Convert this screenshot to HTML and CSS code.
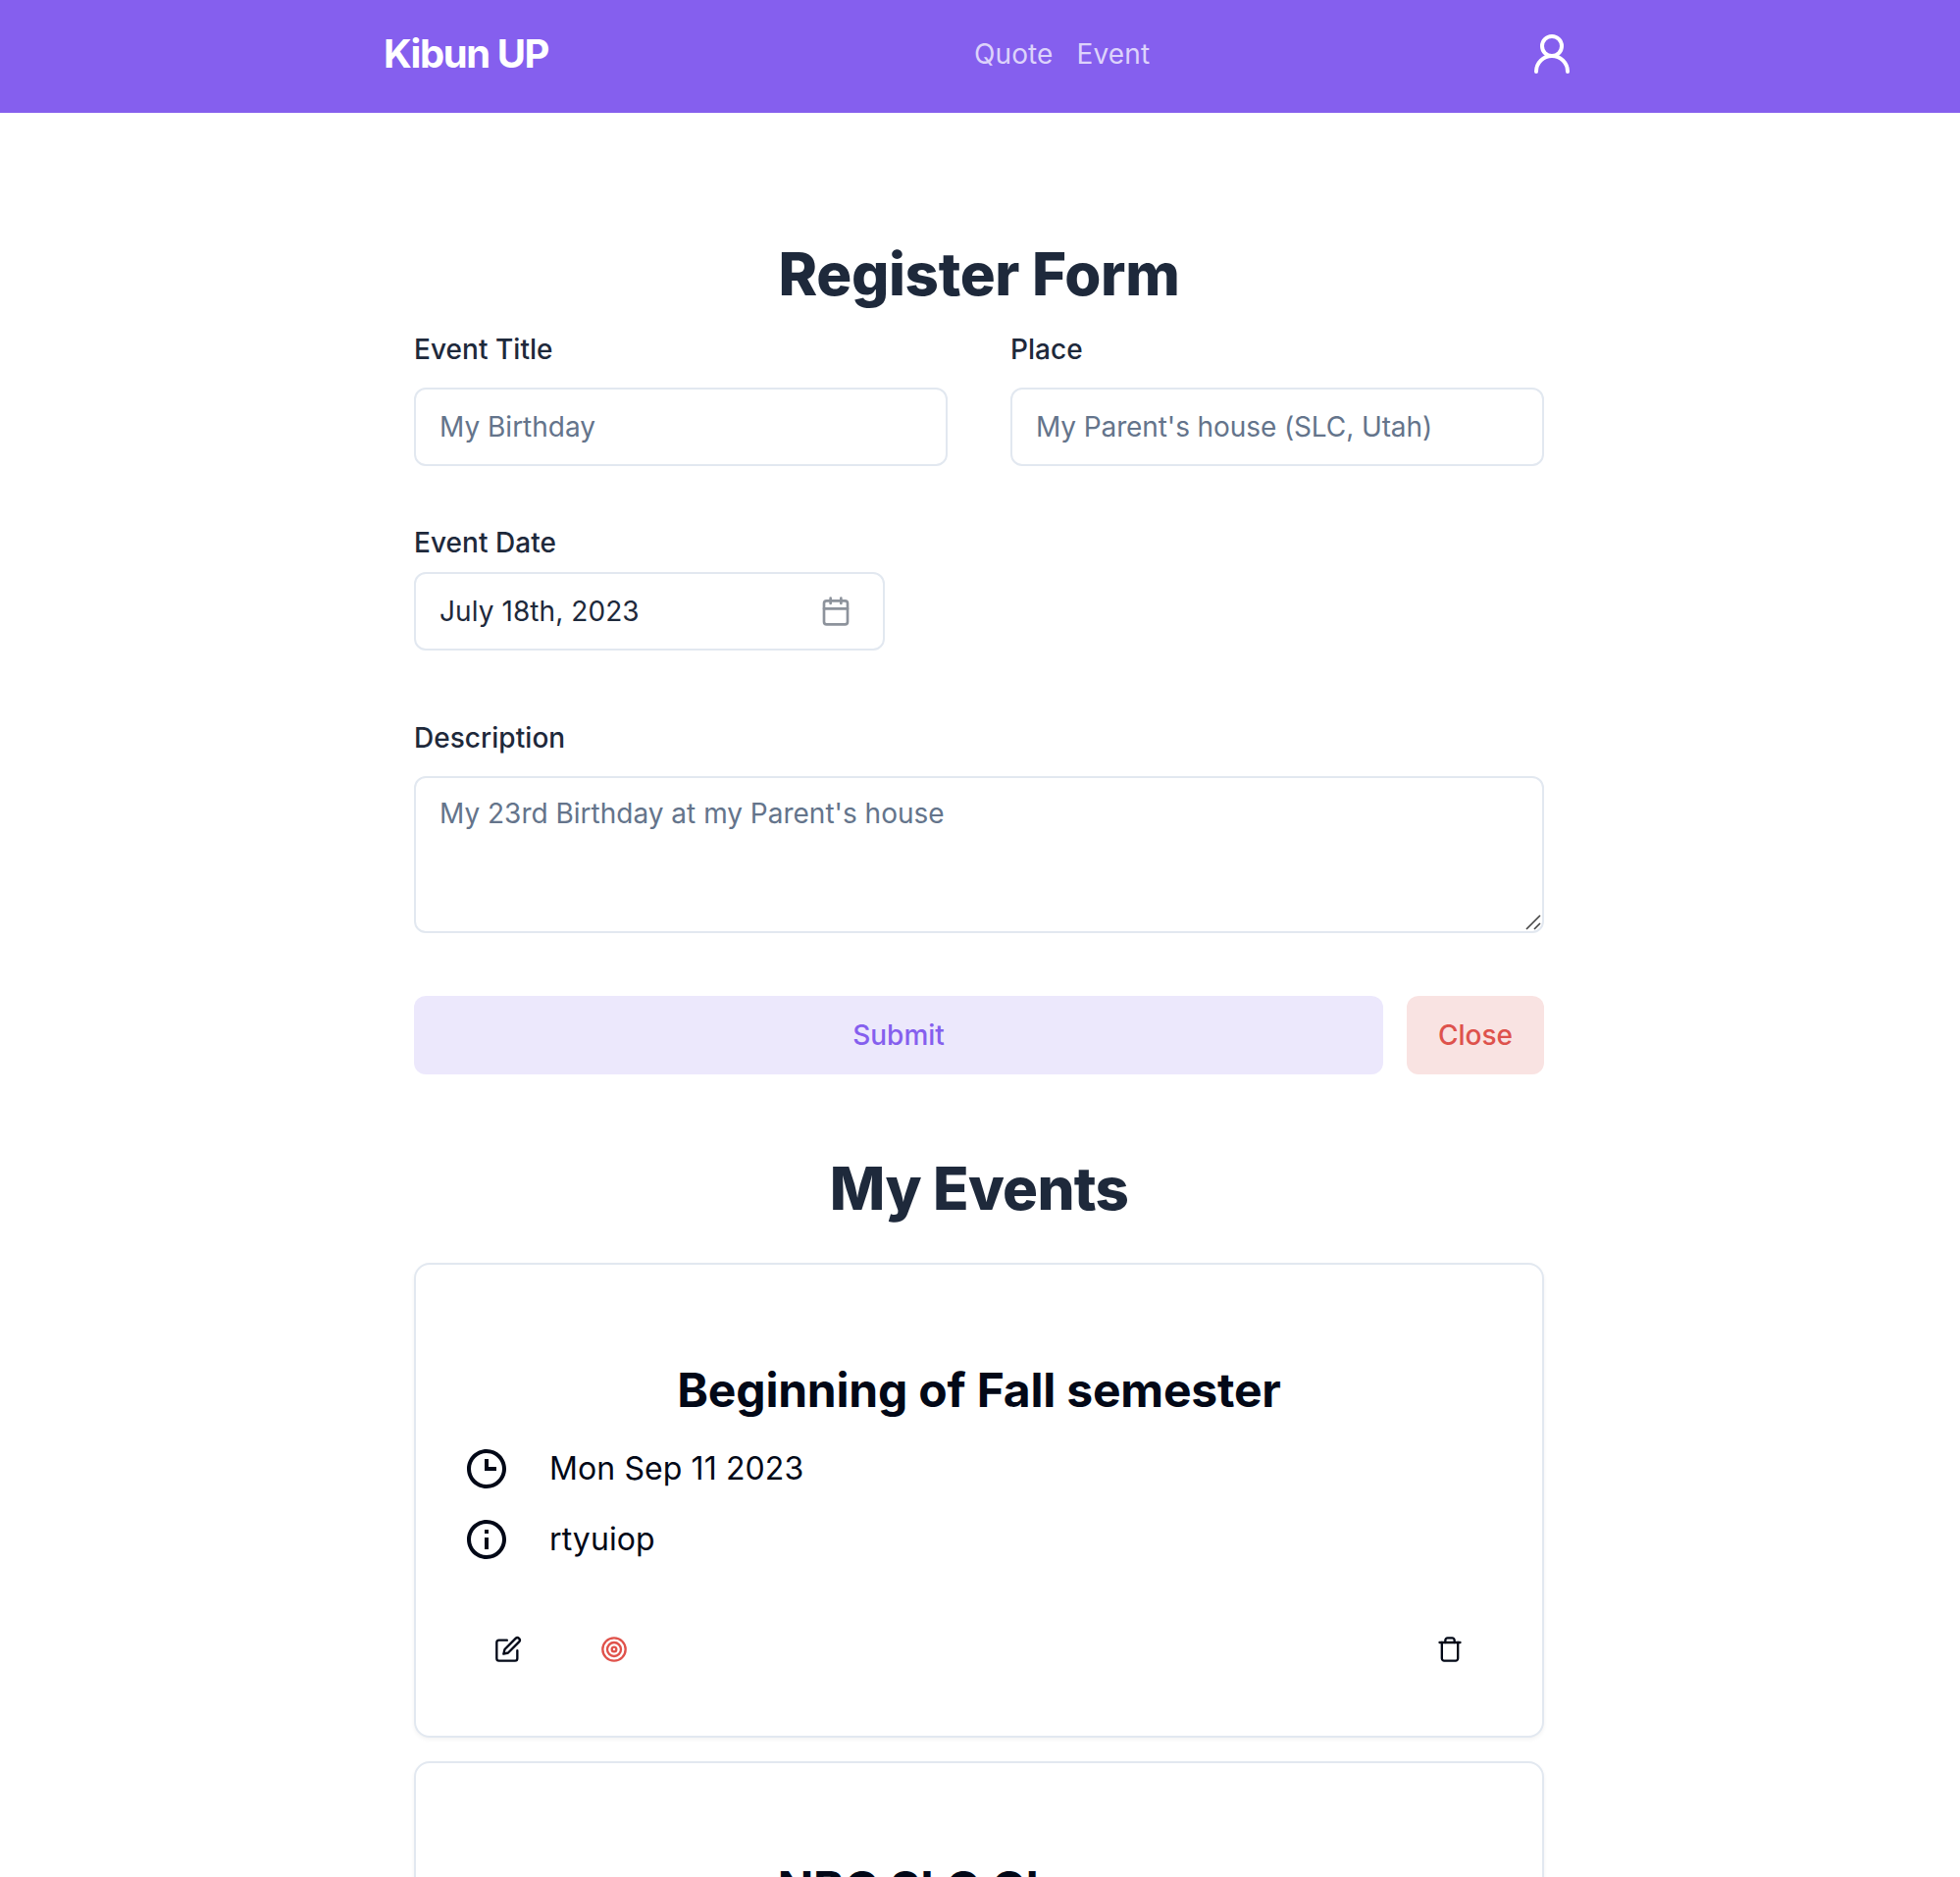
FILE: index.html
```html
<!DOCTYPE html>
<html lang="en">
<head>
<meta charset="utf-8">
<title>Kibun UP</title>
<link rel="stylesheet" href="styles.css">
</head>
<body>
<header class="header">
  <div class="header-inner">
    <a class="logo">Kibun UP</a>
    <nav class="nav"><a>Quote</a><a>Event</a></nav>
    <svg class="icon user" viewBox="0 0 24 24"><circle cx="12" cy="8" r="5"/><path d="M20 21a8 8 0 0 0-16 0"/></svg>
  </div>
</header>
<main class="main">
  <h1 class="heading">Register Form</h1>
  <form class="form">
    <div class="pair">
      <div class="field"><label class="label">Event Title</label><input class="input" placeholder="My Birthday"></div>
      <div class="field"><label class="label">Place</label><input class="input place" placeholder="My Parent's house (SLC, Utah)"></div>
    </div>
    <div class="field date-field">
      <label class="label">Event Date</label>
      <button type="button" class="date">July 18th, 2023
        <svg class="icon calendar" viewBox="0 0 24 24"><rect x="3" y="4" width="18" height="18" rx="2"/><path d="M16 2v4M8 2v4M3 10h18"/></svg>
      </button>
    </div>
    <div class="field description-field">
      <label class="label">Description</label>
      <div class="area-wrap">
        <textarea class="input area" placeholder="My 23rd Birthday at my Parent's house"></textarea>
        <svg class="grip" viewBox="0 0 16 16"><path d="M1 15 15 1M9 15l6-6"/></svg>
      </div>
    </div>
    <div class="actions">
      <button type="button" class="btn submit">Submit</button>
      <button type="button" class="btn close">Close</button>
    </div>
  </form>
  <h2 class="heading events-heading">My Events</h2>
  <section class="events">
    <article class="card">
      <h3 class="card-title">Beginning of Fall semester</h3>
      <div class="row">
        <svg class="solid" viewBox="0 0 24 24"><path d="M12 2C6.486 2 2 6.486 2 12s4.486 10 10 10 10-4.486 10-10S17.514 2 12 2zm0 18c-4.411 0-8-3.589-8-8s3.589-8 8-8 8 3.589 8 8-3.589 8-8 8z"/><path d="M13 7h-2v6h6v-2h-4z"/></svg>
        <span>Mon Sep 11 2023</span>
      </div>
      <div class="row">
        <svg class="solid" viewBox="0 0 24 24"><path d="M12 2C6.486 2 2 6.486 2 12s4.486 10 10 10 10-4.486 10-10S17.514 2 12 2zm0 18c-4.411 0-8-3.589-8-8s3.589-8 8-8 8 3.589 8 8-3.589 8-8 8z"/><path d="M11 11h2v6h-2zm0-4h2v2h-2z"/></svg>
        <span>rtyuiop</span>
      </div>
      <div class="tools">
        <button class="tool"><svg class="icon" viewBox="0 0 24 24"><path d="M11 4H4a2 2 0 0 0-2 2v14a2 2 0 0 0 2 2h14a2 2 0 0 0 2-2v-7"/><path d="M18.5 2.5a2.12 2.12 0 0 1 3 3L12 15l-4 1 1-4Z"/></svg></button>
        <button class="tool target"><svg class="icon" viewBox="0 0 24 24"><circle cx="12" cy="12" r="10"/><circle cx="12" cy="12" r="6"/><circle cx="12" cy="12" r="2"/></svg></button>
        <button class="tool trash"><svg class="icon" viewBox="0 0 24 24"><path d="M3 6h18"/><path d="M19 6v14c0 1-1 2-2 2H7c-1 0-2-1-2-2V6"/><path d="M8 6V4c0-1 1-2 2-2h4c1 0 2 1 2 2v2"/></svg></button>
      </div>
    </article>
    <article class="card">
      <h3 class="card-title">NBC SLC Champs</h3>
    </article>
  </section>
</main>
</body>
</html>
```
FILE: styles.css
```css
* { box-sizing: border-box; }
html { overflow: hidden; }
body {
  margin: 0;
  height: 1913px;
  overflow: hidden;
  background: #fff;
  color: #020817;
  font-family: Inter, "Liberation Sans", sans-serif;
  font-size: 28px;
}
h1, h2, h3 { margin: 0; }
button, input, textarea { font: inherit; color: inherit; margin: 0; }
.icon { fill: none; stroke: currentColor; stroke-width: 2; stroke-linecap: round; stroke-linejoin: round; display: block; }

.header { height: 115px; padding-bottom: 5px; background: #855fee; color: #fff; }
.header-inner { width: 1216px; height: 110px; margin: 0 auto; display: flex; align-items: center; }
.logo { font-size: 40px; font-weight: 700; letter-spacing: -1.45px; width: 200px; white-space: nowrap; padding-bottom: 1px; }
.nav { display: flex; gap: 24px; color: #ddd3fb; margin-left: 402px; letter-spacing: .12px; }
.user { width: 48px; height: 48px; margin-left: auto; margin-right: 1px; }

.main { width: 1152px; margin-left: 422px; padding-top: 128px; }
.heading { font-size: 60px; line-height: 72px; font-weight: 800; text-align: center; color: #1e293b; letter-spacing: -.35px; }
.form { display: flex; flex-direction: column; padding-top: 27px; color: #1e293b; }
.pair { display: grid; grid-template-columns: 1fr 1fr; gap: 64px; }
.field { display: flex; flex-direction: column; gap: 25px; }
.label { font-weight: 500; line-height: 28px; letter-spacing: .04px; }
.input { display: block; width: 100%; height: 80px; padding: 16px 24px; border: 2px solid #e2e8f0; border-radius: 12px; background: #fff; line-height: 40px; outline: none; }
.input::placeholder { color: #64748b; opacity: 1; }
.place { letter-spacing: -.1px; }
.date-field { gap: 16px; margin-top: 64px; }
.date { width: 480px; height: 80px; padding: 0 32px 0 24px; border: 2px solid #e2e8f0; border-radius: 12px; background: #fff; display: flex; align-items: center; justify-content: space-between; letter-spacing: .08px; }
.calendar { width: 32px; height: 32px; opacity: .5; }
.description-field { margin-top: 75px; }
.area-wrap { position: relative; }
.area { height: 160px; resize: none; }
.grip { position: absolute; right: 3px; bottom: 3px; width: 16px; height: 16px; fill: none; stroke: #444; stroke-width: 1.6; }
.actions { display: flex; gap: 24px; margin-top: 64px; }
.btn { height: 80px; padding: 0; border: 0; border-radius: 12px; font-weight: 500; }
.submit { flex: 1; background: #ece8fc; color: #855fee; }
.close { width: 140px; background: #f9e3e2; color: #de524c; }

.events-heading { margin-top: 80px; letter-spacing: -.75px; }
.events { display: flex; flex-direction: column; gap: 24px; margin-top: 40px; }
.card { height: 484px; padding: 104px 48px 48px; border: 2px solid #e2e8f0; border-radius: 16px; background: #fff; box-shadow: 0 2px 4px rgb(0 0 0 / 5%); display: flex; flex-direction: column; }
.card-title { font-size: 48px; line-height: 48px; font-weight: 700; text-align: center; letter-spacing: -.2px; margin-bottom: 32px; }
.row { display: flex; gap: 40px; height: 48px; line-height: 48px; font-size: 32px; letter-spacing: .1px; margin-bottom: 24px; }
.solid { width: 48px; height: 48px; fill: currentColor; }
.tools { display: flex; gap: 16px; margin-top: 24px; }
.tool { width: 92px; height: 80px; padding: 0; border: 0; background: none; display: grid; place-items: center; }
.tool .icon { width: 28px; height: 28px; }
.target { color: #e0524b; }
.trash { margin-left: auto; }
```
